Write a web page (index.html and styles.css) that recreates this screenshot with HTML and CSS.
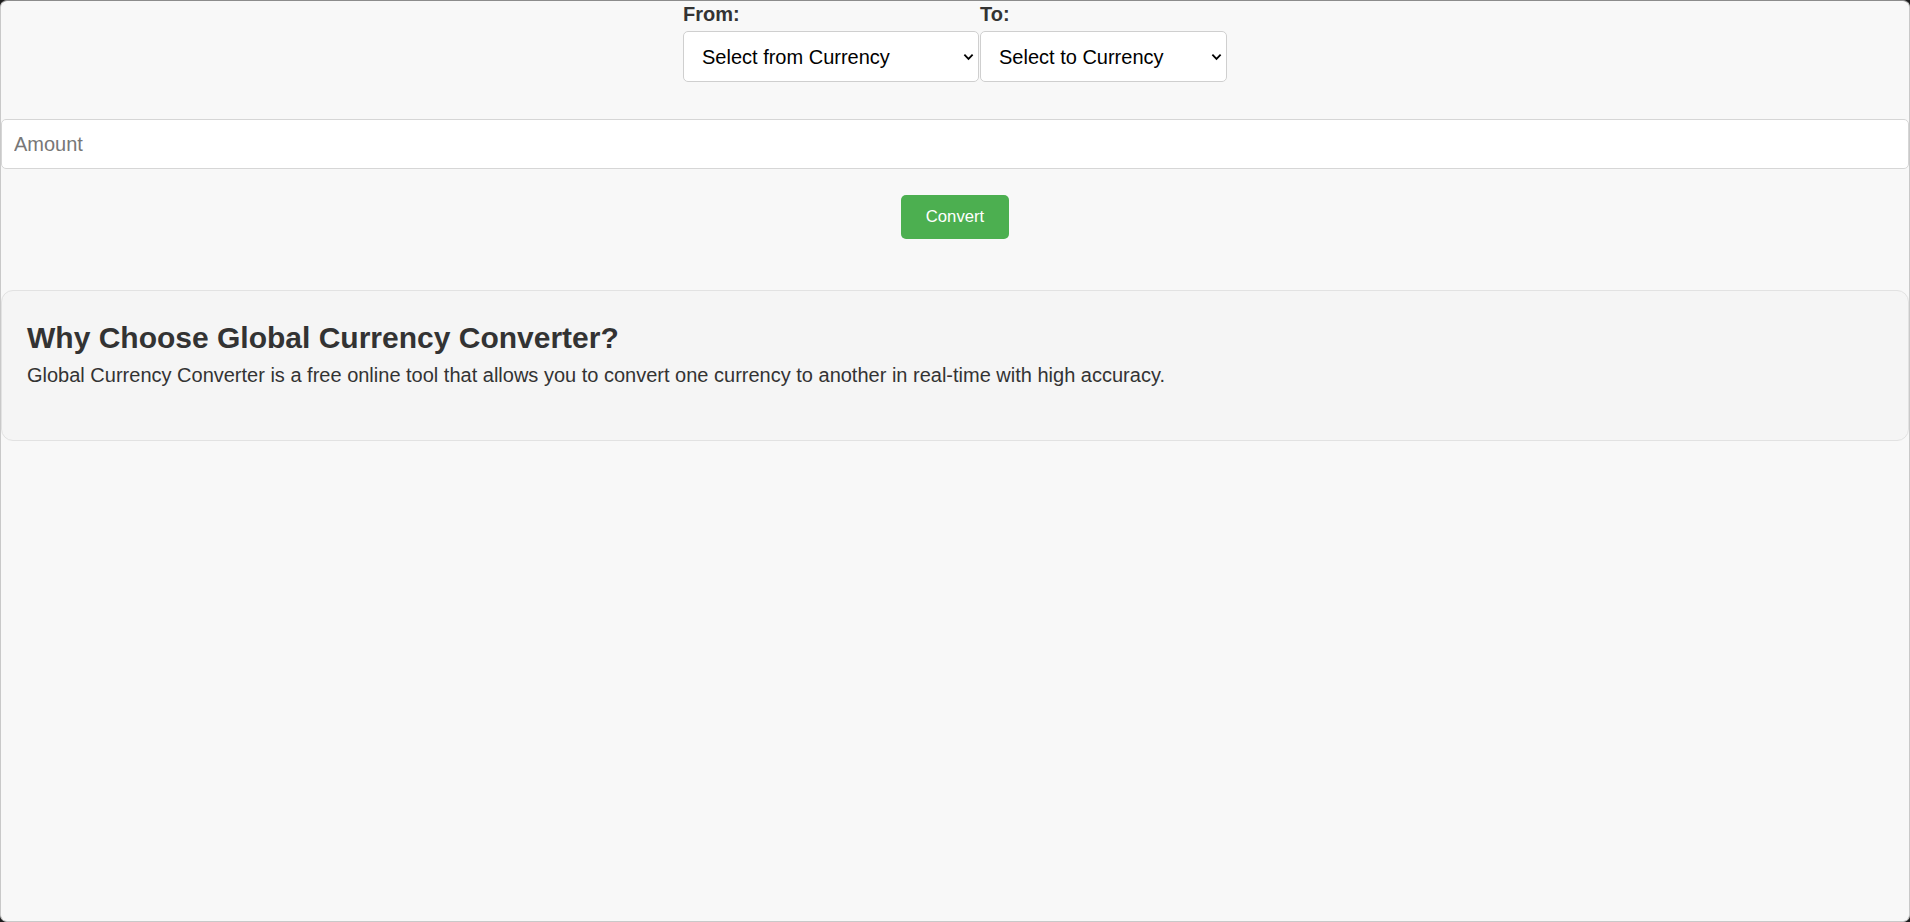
FILE: index.html
```html
<!DOCTYPE html>
<html lang="en">
<head>
<meta charset="utf-8">
<title>Global Currency Converter</title>
<link rel="stylesheet" href="styles.css">
</head>
<body>
<div class="window">
  <main class="converter">
    <div class="currency-row">
      <div class="field">
        <label class="field-label" for="from">From:</label>
        <select class="currency-select select-from" id="from">
          <option>Select from Currency</option>
        </select>
      </div>
      <div class="field">
        <label class="field-label" for="to">To:</label>
        <select class="currency-select select-to" id="to">
          <option>Select to Currency</option>
        </select>
      </div>
    </div>
    <input class="amount-input" type="number" placeholder="Amount">
    <div class="actions">
      <button class="convert-btn" type="button">Convert</button>
    </div>
    <section class="info-card">
      <h2 class="info-title">Why Choose Global Currency Converter?</h2>
      <p class="info-text">Global Currency Converter is a free online tool that allows you to convert one currency to another in real-time with high accuracy.</p>
    </section>
  </main>
</div>
</body>
</html>
```
FILE: styles.css
```css
html {
  background: #1c1c1c;
}
body {
  margin: 0;
  font-family: "Liberation Sans", Arial, sans-serif;
  color: #333;
}
.window {
  box-sizing: border-box;
  height: 922px;
  background: #f8f8f8;
  border: 1px solid #c9c9c9;
  border-top-color: #8c8c8c;
  border-radius: 7px;
  overflow: hidden;
}
.converter {
  display: flex;
  flex-direction: column;
}
.currency-row {
  display: flex;
  justify-content: center;
  gap: 1px;
  padding-top: 2px;
}
.field {
  display: flex;
  flex-direction: column;
}
.field-label {
  font-size: 20px;
  font-weight: bold;
  line-height: 22px;
  margin-bottom: 6px;
  color: #333;
}
.currency-select {
  box-sizing: border-box;
  height: 51px;
  padding: 0 30px 0 18px;
  font-family: "Liberation Sans", Arial, sans-serif;
  font-size: 20px;
  color: #000;
  background-color: #fff;
  background-image: url("data:image/svg+xml;utf8,<svg xmlns='http://www.w3.org/2000/svg' width='12' height='8' viewBox='0 0 12 8'><path d='M1.5 1.5 L6 6 L10.5 1.5' fill='none' stroke='%23000' stroke-width='2'/></svg>");
  background-repeat: no-repeat;
  background-position: right 4px center;
  background-size: 11px 8px;
  border: 1px solid #cfcfcf;
  border-radius: 5px;
  appearance: none;
  -webkit-appearance: none;
}
.select-from { width: 296px; }
.select-to { width: 247px; }
.amount-input {
  box-sizing: border-box;
  width: 100%;
  height: 50px;
  margin-top: 37px;
  padding: 0 12px;
  font-family: "Liberation Sans", Arial, sans-serif;
  font-size: 20px;
  color: #333;
  background: #fff;
  border: 1px solid #d6d6d6;
  border-radius: 5px;
}
.amount-input::placeholder {
  color: #777;
}
.actions {
  display: flex;
  justify-content: center;
  margin-top: 26px;
}
.convert-btn {
  box-sizing: border-box;
  width: 108px;
  height: 44px;
  padding: 0;
  font-family: "Liberation Sans", Arial, sans-serif;
  font-size: 16.7px;
  color: #fff;
  background: #4caf50;
  border: none;
  border-radius: 5px;
}
.info-card {
  box-sizing: border-box;
  height: 151px;
  margin-top: 51px;
  padding: 26px 25px 24px;
  background: #f5f5f5;
  border: 1px solid #e2e2e2;
  border-radius: 12px;
}
.info-title {
  margin: 4px 0 9px;
  font-size: 30px;
  font-weight: bold;
  line-height: 34px;
  color: #333;
}
.info-text {
  margin: 0;
  font-size: 20px;
  line-height: 22px;
  color: #333;
}
```
